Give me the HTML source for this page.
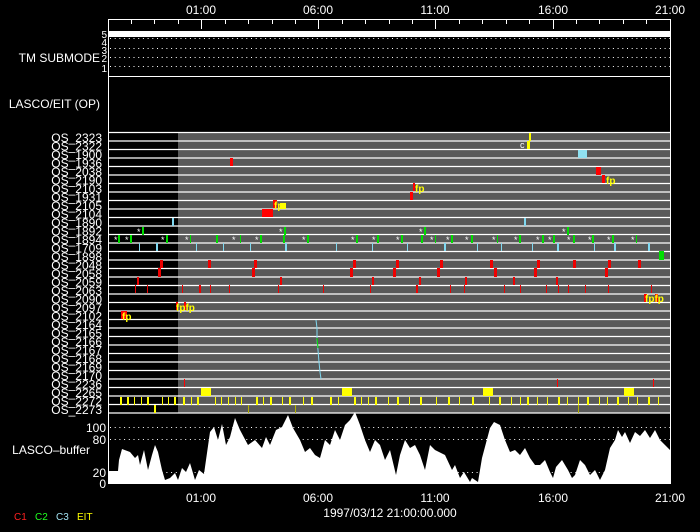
<!DOCTYPE html>
<html><head><meta charset="utf-8"><style>
html,body{margin:0;padding:0;background:#000;}
svg{display:block;}
text{font-family:"Liberation Sans",sans-serif;fill:#fff;}
text.y{fill:#ffff00;font-weight:bold;}
</style></head><body>
<svg width="700" height="532" viewBox="0 0 700 532" xmlns="http://www.w3.org/2000/svg">
<rect width="700" height="532" fill="#000"/>
<g font-size="12" text-anchor="middle">
<text x="201" y="14">01:00</text><text x="318" y="14">06:00</text><text x="435" y="14">11:00</text><text x="553" y="14">16:00</text><text x="670" y="14">21:00</text>
</g>
<rect x="108.5" y="19.5" width="562" height="464" fill="none" stroke="#fff" stroke-width="1"/>
<g stroke="#fff" stroke-width="1">
<path d="M131.5 19v5M154.5 19v5M178.5 19v5M201.5 19v10M225.5 19v5M248.5 19v5M272.5 19v5M295.5 19v5M318.5 19v10M342.5 19v5M365.5 19v5M389.5 19v5M412.5 19v5M435.5 19v10M459.5 19v5M482.5 19v5M506.5 19v5M529.5 19v5M553.5 19v10M576.5 19v5M599.5 19v5M623.5 19v5M646.5 19v5"/>
</g>
<rect x="109" y="31" width="561" height="6" fill="#fff"/>
<g stroke="#fff" stroke-dasharray="1 3.7">
<line x1="110" y1="38.5" x2="670" y2="38.5"/><line x1="110" y1="48.5" x2="670" y2="48.5"/><line x1="110" y1="57.5" x2="670" y2="57.5"/><line x1="110" y1="66.5" x2="670" y2="66.5"/>
</g>
<line x1="108" y1="76.5" x2="671" y2="76.5" stroke="#fff"/>
<g font-size="10" text-anchor="end">
<text x="107" y="38">5</text><text x="107" y="46">4</text><text x="107" y="54">3</text><text x="107" y="62">2</text><text x="107" y="72">1</text>
</g>
<text x="100" y="62" font-size="12" text-anchor="end">TM SUBMODE</text>
<text x="100" y="108" font-size="12" text-anchor="end">LASCO/EIT (OP)</text>
<rect x="178" y="132" width="492" height="281" fill="#595959"/>
<g stroke="#fff" stroke-width="1.2">
<line x1="108" y1="132.5" x2="671" y2="132.5"/><line x1="108" y1="141" x2="670" y2="141"/><line x1="108" y1="149.5" x2="670" y2="149.5"/><line x1="108" y1="158" x2="670" y2="158"/><line x1="108" y1="166.5" x2="670" y2="166.5"/><line x1="108" y1="175" x2="670" y2="175"/><line x1="108" y1="183.5" x2="670" y2="183.5"/><line x1="108" y1="192" x2="670" y2="192"/><line x1="108" y1="200.5" x2="670" y2="200.5"/><line x1="108" y1="209" x2="670" y2="209"/><line x1="108" y1="217.5" x2="670" y2="217.5"/><line x1="108" y1="226" x2="670" y2="226"/><line x1="108" y1="234.5" x2="670" y2="234.5"/><line x1="108" y1="243" x2="670" y2="243"/><line x1="108" y1="251.5" x2="670" y2="251.5"/><line x1="108" y1="260" x2="670" y2="260"/><line x1="108" y1="268.5" x2="670" y2="268.5"/><line x1="108" y1="277" x2="670" y2="277"/><line x1="108" y1="285.5" x2="670" y2="285.5"/><line x1="108" y1="294" x2="670" y2="294"/><line x1="108" y1="302.5" x2="670" y2="302.5"/><line x1="108" y1="311" x2="670" y2="311"/><line x1="108" y1="319.5" x2="670" y2="319.5"/><line x1="108" y1="328" x2="670" y2="328"/><line x1="108" y1="336.5" x2="670" y2="336.5"/><line x1="108" y1="345" x2="670" y2="345"/><line x1="108" y1="353.5" x2="670" y2="353.5"/><line x1="108" y1="362" x2="670" y2="362"/><line x1="108" y1="370.5" x2="670" y2="370.5"/><line x1="108" y1="379" x2="670" y2="379"/><line x1="108" y1="387.5" x2="670" y2="387.5"/><line x1="108" y1="396" x2="670" y2="396"/><line x1="108" y1="404.5" x2="670" y2="404.5"/><line x1="108" y1="413" x2="671" y2="413"/>
</g>
<g font-size="12" text-anchor="end">
<text x="102" y="142">OS_2323</text><text x="102" y="150.5">OS_2322</text><text x="102" y="159">OS_1900</text><text x="102" y="167.5">OS_1936</text><text x="102" y="176">OS_2038</text><text x="102" y="184.5">OS_2190</text><text x="102" y="193">OS_2103</text><text x="102" y="201.5">OS_1931</text><text x="102" y="210">OS_2105</text><text x="102" y="218.5">OS_2104</text><text x="102" y="227">OS_1890</text><text x="102" y="235.5">OS_1892</text><text x="102" y="244">OS_1894</text><text x="102" y="252.5">OS_1709</text><text x="102" y="261">OS_1898</text><text x="102" y="269.5">OS_2048</text><text x="102" y="278">OS_2058</text><text x="102" y="286.5">OS_2059</text><text x="102" y="295">OS_2063</text><text x="102" y="303.5">OS_2090</text><text x="102" y="312">OS_2097</text><text x="102" y="320.5">OS_2102</text><text x="102" y="329">OS_2164</text><text x="102" y="337.5">OS_2165</text><text x="102" y="346">OS_2166</text><text x="102" y="354.5">OS_2167</text><text x="102" y="363">OS_2168</text><text x="102" y="371.5">OS_2169</text><text x="102" y="380">OS_2170</text><text x="102" y="388.5">OS_2236</text><text x="102" y="397">OS_2265</text><text x="102" y="405.5">OS_2272</text><text x="102" y="414">OS_2273</text>
</g>
<g fill="#ffff00">
<rect x="529" y="133" width="2" height="8"/><rect x="527" y="141" width="3" height="8"/>
<rect x="201" y="388" width="10" height="8"/><rect x="342" y="388" width="10" height="8"/><rect x="483" y="388" width="10" height="8"/><rect x="624" y="388" width="10" height="8"/>
<rect x="154" y="405" width="2" height="8"/>
<rect x="280" y="203" width="6" height="6"/>
</g>
<g fill="#ffff00">
<rect x="120" y="397" width="2" height="8"/><rect x="127" y="397" width="2" height="8"/><rect x="134" y="397" width="1" height="8"/><rect x="141" y="397" width="1" height="8"/><rect x="147" y="397" width="2" height="8"/><rect x="162" y="397" width="1" height="8"/><rect x="168" y="397" width="1" height="8"/><rect x="174" y="397" width="2" height="8"/><rect x="183" y="397" width="2" height="8"/><rect x="191" y="397" width="1" height="8"/><rect x="197" y="397" width="2" height="8"/><rect x="215" y="397" width="1" height="8"/><rect x="221" y="397" width="1" height="8"/><rect x="228" y="397" width="1" height="8"/><rect x="235" y="397" width="1" height="8"/><rect x="241" y="397" width="1" height="8"/><rect x="256" y="397" width="2" height="8"/><rect x="263" y="397" width="1" height="8"/><rect x="270" y="397" width="2" height="8"/><rect x="282" y="397" width="1" height="8"/><rect x="289" y="397" width="2" height="8"/><rect x="303" y="397" width="1" height="8"/><rect x="311" y="397" width="2" height="8"/><rect x="330" y="397" width="2" height="8"/><rect x="338" y="397" width="1" height="8"/><rect x="354" y="397" width="2" height="8"/><rect x="361" y="397" width="1" height="8"/><rect x="368" y="397" width="1" height="8"/><rect x="375" y="397" width="2" height="8"/><rect x="388" y="397" width="1" height="8"/><rect x="397" y="397" width="2" height="8"/><rect x="409" y="397" width="1" height="8"/><rect x="420" y="397" width="2" height="8"/><rect x="436" y="397" width="1" height="8"/><rect x="448" y="397" width="2" height="8"/><rect x="459" y="397" width="1" height="8"/><rect x="472" y="397" width="2" height="8"/><rect x="489" y="397" width="1" height="8"/><rect x="499" y="397" width="2" height="8"/><rect x="511" y="397" width="1" height="8"/><rect x="520" y="397" width="1" height="8"/><rect x="527" y="397" width="2" height="8"/><rect x="537" y="397" width="1" height="8"/><rect x="547" y="397" width="1" height="8"/><rect x="558" y="397" width="2" height="8"/><rect x="567" y="397" width="1" height="8"/><rect x="578" y="397" width="1" height="8"/><rect x="587" y="397" width="2" height="8"/><rect x="599" y="397" width="1" height="8"/><rect x="607" y="397" width="1" height="8"/><rect x="617" y="397" width="2" height="8"/><rect x="628" y="397" width="1" height="8"/><rect x="637" y="397" width="1" height="8"/><rect x="648" y="397" width="2" height="8"/><rect x="658" y="397" width="1" height="8"/>
</g>
<rect x="248" y="405" width="1" height="8" fill="#b0b000"/><rect x="295" y="405" width="1" height="8" fill="#b0b000"/><rect x="578" y="405" width="1" height="8" fill="#b0b000"/>
<rect x="578" y="150" width="9" height="8" fill="#90e0f0"/>
<g fill="#ff0000">
<rect x="230" y="158" width="3" height="8"/><rect x="596" y="167" width="5" height="8"/><rect x="602" y="175" width="3" height="8"/>
<rect x="413" y="183" width="2" height="8"/><rect x="410" y="192" width="3" height="8"/>
<rect x="273" y="200" width="4" height="8"/><rect x="262" y="209" width="11" height="8"/>
<rect x="121" y="311" width="6" height="8"/><rect x="176" y="302" width="2" height="8"/><rect x="184" y="302" width="2" height="8"/>
<rect x="644" y="294" width="3" height="8"/><rect x="655" y="294" width="3" height="8"/>
<rect x="184" y="379" width="1" height="8"/><rect x="557" y="379" width="1" height="8"/><rect x="653" y="379" width="1" height="8"/>
</g>
<g fill="#ee0000">
<rect x="160" y="260" width="3" height="8"/><rect x="208" y="260" width="3" height="8"/><rect x="254" y="260" width="3" height="8"/><rect x="353" y="260" width="3" height="8"/><rect x="396" y="260" width="3" height="8"/><rect x="440" y="260" width="3" height="8"/><rect x="490" y="260" width="3" height="8"/><rect x="537" y="260" width="3" height="8"/><rect x="573" y="260" width="3" height="8"/><rect x="608" y="260" width="3" height="8"/><rect x="638" y="260" width="3" height="8"/>
<rect x="158" y="268" width="3" height="9"/><rect x="252" y="268" width="3" height="9"/><rect x="350" y="268" width="3" height="9"/><rect x="393" y="268" width="3" height="9"/><rect x="437" y="268" width="3" height="9"/><rect x="494" y="268" width="3" height="9"/><rect x="534" y="268" width="3" height="9"/><rect x="605" y="268" width="3" height="9"/>
<rect x="137" y="277" width="2" height="8"/><rect x="280" y="277" width="2" height="8"/><rect x="372" y="277" width="2" height="8"/><rect x="419" y="277" width="2" height="8"/><rect x="465" y="277" width="2" height="8"/><rect x="513" y="277" width="2" height="8"/><rect x="556" y="277" width="2" height="8"/>
<rect x="135" y="285" width="1" height="8"/><rect x="147" y="285" width="1" height="8"/><rect x="182" y="285" width="1" height="8"/><rect x="199" y="285" width="2" height="8"/><rect x="210" y="285" width="1" height="8"/><rect x="229" y="285" width="1" height="8"/><rect x="278" y="285" width="1" height="8"/><rect x="323" y="285" width="1" height="8"/><rect x="370" y="285" width="1" height="8"/><rect x="416" y="285" width="2" height="8"/><rect x="450" y="285" width="1" height="8"/><rect x="464" y="285" width="1" height="8"/><rect x="504" y="285" width="1" height="8"/><rect x="520" y="285" width="1" height="8"/><rect x="546" y="285" width="1" height="8"/><rect x="558" y="285" width="1" height="8"/><rect x="568" y="285" width="1" height="8"/><rect x="585" y="285" width="1" height="8"/><rect x="608" y="285" width="1" height="8"/><rect x="651" y="285" width="1" height="8"/>
</g>
<g fill="#00dd00">
<rect x="142" y="227" width="2" height="8"/><rect x="284" y="227" width="2" height="8"/><rect x="424" y="227" width="2" height="8"/><rect x="567" y="227" width="2" height="8"/>
<rect x="118" y="235" width="2" height="8"/><rect x="130" y="235" width="2" height="8"/><rect x="166" y="235" width="2" height="8"/><rect x="190" y="235" width="1" height="8"/><rect x="216" y="235" width="2" height="8"/><rect x="240" y="235" width="1" height="8"/><rect x="260" y="235" width="2" height="8"/><rect x="283" y="235" width="2" height="8"/><rect x="307" y="235" width="2" height="8"/><rect x="356" y="235" width="2" height="8"/><rect x="377" y="235" width="2" height="8"/><rect x="401" y="235" width="2" height="8"/><rect x="421" y="235" width="2" height="8"/><rect x="435" y="235" width="1" height="8"/><rect x="451" y="235" width="2" height="8"/><rect x="471" y="235" width="2" height="8"/><rect x="497" y="235" width="1" height="8"/><rect x="519" y="235" width="2" height="8"/><rect x="542" y="235" width="2" height="8"/><rect x="553" y="235" width="2" height="8"/><rect x="573" y="235" width="2" height="8"/><rect x="592" y="235" width="2" height="8"/><rect x="612" y="235" width="2" height="8"/><rect x="636" y="235" width="1" height="8"/>
<rect x="659" y="251" width="5" height="9"/>
</g>
<g font-size="9">
<text x="114" y="243">*</text><text x="125" y="243">*</text><text x="161" y="243">*</text><text x="185" y="243">*</text><text x="232" y="243">*</text><text x="255" y="243">*</text><text x="302" y="243">*</text><text x="351" y="243">*</text><text x="372" y="243">*</text><text x="396" y="243">*</text><text x="430" y="243">*</text><text x="446" y="243">*</text><text x="465" y="243">*</text><text x="492" y="243">*</text><text x="514" y="243">*</text><text x="536" y="243">*</text><text x="548" y="243">*</text><text x="567" y="243">*</text><text x="588" y="243">*</text><text x="607" y="243">*</text><text x="631" y="243">*</text>
<text x="137" y="235">*</text><text x="279" y="235">*</text><text x="419" y="235">*</text><text x="562" y="235">*</text>
<text x="520" y="148">c</text>
</g>
<g fill="#80d8f0">
<rect x="172" y="218" width="2" height="8"/><rect x="524" y="218" width="2" height="8"/>
<rect x="139" y="243" width="1" height="8"/><rect x="156" y="243" width="2" height="8"/><rect x="196" y="243" width="1" height="8"/><rect x="223" y="243" width="1" height="8"/><rect x="250" y="243" width="1" height="8"/><rect x="285" y="243" width="2" height="8"/><rect x="336" y="243" width="1" height="8"/><rect x="372" y="243" width="1" height="8"/><rect x="407" y="243" width="1" height="8"/><rect x="444" y="243" width="2" height="8"/><rect x="477" y="243" width="1" height="8"/><rect x="501" y="243" width="1" height="8"/><rect x="532" y="243" width="1" height="8"/><rect x="557" y="243" width="2" height="8"/><rect x="594" y="243" width="1" height="8"/><rect x="614" y="243" width="2" height="8"/><rect x="648" y="243" width="2" height="8"/>
</g>
<path d="M316 320L317 328L317 340L318 350L319 362L320 372L321 379" stroke="#80d8f0" stroke-width="1" fill="none"/>
<path d="M317 338L318 348" stroke="#00dd00" stroke-width="1"/>
<g font-size="10">
<text class="y" x="606" y="184">fp</text><text class="y" x="415" y="192">fp</text><text class="y" x="274" y="209">fp</text>
<text class="y" x="122" y="320">fp</text><text class="y" x="176" y="311">fpfp</text><text class="y" x="645" y="302">fpfp</text>
</g>
<g stroke="#fff" stroke-dasharray="1 3.7">
<line x1="110" y1="427.5" x2="670" y2="427.5"/><line x1="110" y1="439.5" x2="670" y2="439.5"/><line x1="110" y1="472.5" x2="670" y2="472.5"/>
</g>
<polygon fill="#fff" points="109,483 109,471 118,471 119,460 122,449 130,452 135,458 138,455 140,465 144,450 148,470 152,455 155,445 158,452 162,470 165,480 170,478 175,473 178,480 182,468 186,472 190,463 195,480 199,470 204,474 210,432 214,427 218,440 222,424 226,445 230,437 235,418 240,430 248,445 255,440 262,448 266,437 270,445 276,430 282,427 288,415 293,428 300,440 305,452 310,448 315,455 320,458 325,440 330,445 335,430 340,440 345,425 350,420 355,412 360,425 365,440 370,452 375,440 380,445 385,460 390,450 396,475 400,455 405,440 410,448 415,445 420,455 425,470 430,445 435,450 445,455 452,470 455,465 460,478 464,472 470,482 472,478 478,482 482,458 490,428 494,422 500,425 505,440 510,452 515,450 520,455 525,448 530,458 535,465 540,465 545,460 550,472 553,478 556,467 562,460 568,470 572,478 575,475 580,460 585,465 590,475 595,470 600,480 605,470 610,448 615,440 618,430 622,437 625,432 630,443 635,432 640,436 645,430 650,438 655,430 660,440 665,445 670,450 670,483"/>
<g font-size="12" text-anchor="end">
<text x="106" y="432">100</text><text x="106" y="444">80</text><text x="106" y="477">20</text><text x="106" y="488">0</text>
</g>
<text x="90" y="454" font-size="12" text-anchor="end">LASCO–buffer</text>
<g font-size="12" text-anchor="middle">
<text x="201" y="502">01:00</text><text x="318" y="502">06:00</text><text x="435" y="502">11:00</text><text x="553" y="502">16:00</text><text x="670" y="502">21:00</text>
<text x="390" y="517">1997/03/12 21:00:00.000</text>
</g>
<g font-size="10">
<text x="14" y="520" style="fill:#ff2020">C1</text><text x="35" y="520" style="fill:#20ff20">C2</text><text x="56" y="520" style="fill:#a0e0f0">C3</text><text x="77" y="520" style="fill:#ffff00">EIT</text>
</g>
</svg>
</body></html>
